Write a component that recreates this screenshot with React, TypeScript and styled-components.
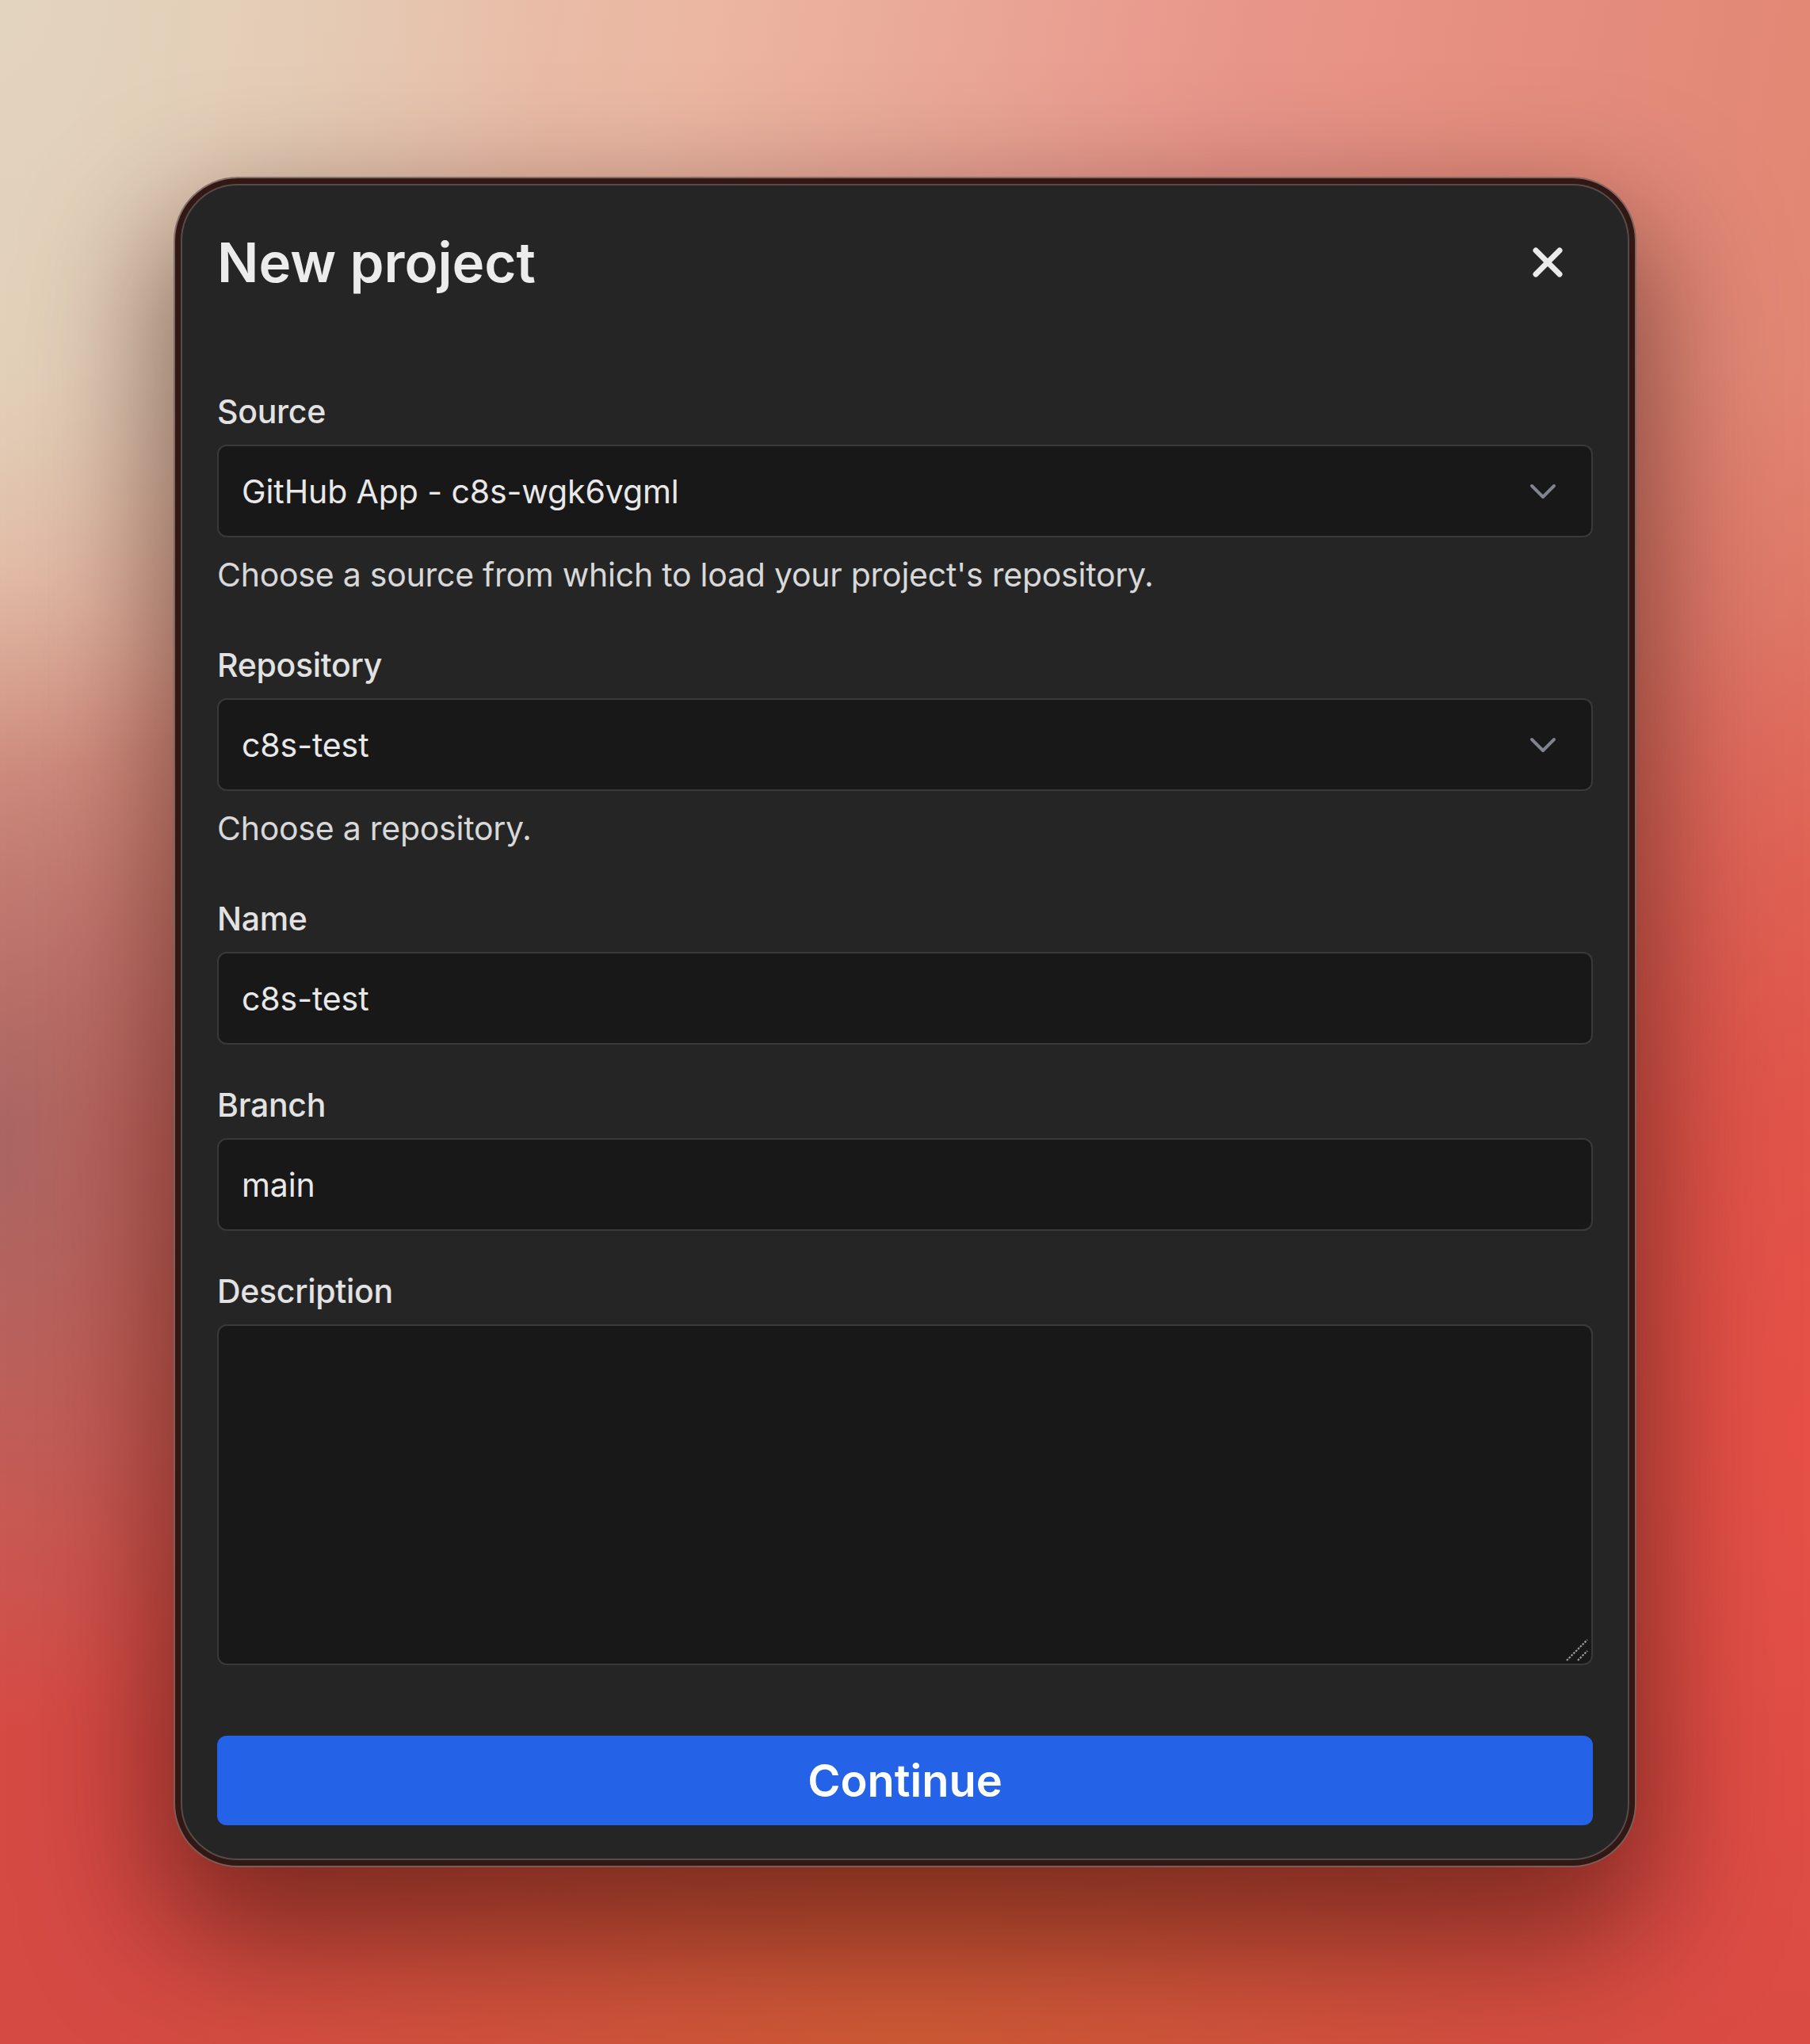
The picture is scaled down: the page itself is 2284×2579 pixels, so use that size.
import styled, { createGlobalStyle } from "styled-components";

const GlobalStyle = createGlobalStyle`
  html, body {
    margin: 0;
    padding: 0;
  }

  body {
    font-family: Inter, "Liberation Sans", sans-serif;
    -webkit-font-smoothing: antialiased;
  }

  * {
    box-sizing: border-box;
  }
`;

const ChevronIcon = () => (
  <svg width="56" height="56" viewBox="0 0 24 24" fill="none" stroke="currentColor" strokeWidth="1.7" strokeLinecap="round" strokeLinejoin="round">
    <path d="m6 9 6 6 6-6" />
  </svg>
);

const CloseIcon = () => (
  <svg width="40" height="40" viewBox="0 0 40 40" fill="none" stroke="currentColor" strokeWidth="7" strokeLinecap="round">
    <path d="M5 5 35 35" />
    <path d="M35 5 5 35" />
  </svg>
);

// the little grip in the textarea's corner
const ResizeGrip = () => (
  <svg width="30" height="30" viewBox="0 0 30 30" fill="none" stroke="#9b9b9b" strokeWidth="2.2" strokeDasharray="2.5 1.5">
    <path d="M2 28 28 2" />
    <path d="M16 28 28 16" />
  </svg>
);

const App = () => {
  return (
    <>
      <GlobalStyle />
      <Page>
        <Dialog role="dialog" aria-labelledby="new-project-title">
          <Header>
            <Title id="new-project-title">New project</Title>
            <CloseButton type="button" aria-label="Close">
              <CloseIcon />
            </CloseButton>
          </Header>

          <Form onSubmit={(e) => e.preventDefault()}>
            <Field>
              <Label>Source</Label>
              <SelectTrigger type="button">
                <span>GitHub App - c8s-wgk6vgml</span>
                <ChevronWrap>
                  <ChevronIcon />
                </ChevronWrap>
              </SelectTrigger>
              <Helper>Choose a source from which to load your project's repository.</Helper>
            </Field>

            <Field>
              <Label>Repository</Label>
              <SelectTrigger type="button">
                <span>c8s-test</span>
                <ChevronWrap>
                  <ChevronIcon />
                </ChevronWrap>
              </SelectTrigger>
              <Helper>Choose a repository.</Helper>
            </Field>

            <Field>
              <Label htmlFor="name">Name</Label>
              <TextInput id="name" defaultValue="c8s-test" />
            </Field>

            <Field>
              <Label htmlFor="branch">Branch</Label>
              <TextInput id="branch" defaultValue="main" />
            </Field>

            <Field>
              <Label htmlFor="description">Description</Label>
              <TextAreaWrap>
                <TextArea id="description" />
                <GripSpot>
                  <ResizeGrip />
                </GripSpot>
              </TextAreaWrap>
            </Field>

            <SubmitButton type="submit">Continue</SubmitButton>
          </Form>
        </Dialog>
      </Page>
    </>
  );
};

const Page = styled.div`
  min-height: 100vh;
  width: 100%;
  display: flex;
  align-items: center;
  justify-content: center;
  background-color: #dc6a5c;
  background-image:
    radial-gradient(ellipse 30% 38% at 0% 0%, rgba(227, 212, 190, 1) 0%, rgba(227, 212, 190, 0.5) 55%, rgba(227, 212, 190, 0) 100%),
    radial-gradient(ellipse 16% 28% at 0% 56%, rgba(150, 100, 100, 0.7) 0%, rgba(150, 100, 100, 0) 100%),
    radial-gradient(ellipse 45% 22% at 50% 100%, rgba(205, 92, 52, 0.9) 0%, rgba(205, 92, 52, 0) 100%),
    radial-gradient(ellipse 30% 40% at 100% 70%, rgba(232, 80, 70, 0.9) 0%, rgba(232, 80, 70, 0) 100%),
    linear-gradient(to bottom, rgba(214, 74, 68, 0) 0%, rgba(214, 74, 68, 0) 18%, rgba(214, 76, 68, 0.75) 55%, rgba(214, 74, 68, 1) 85%),
    linear-gradient(100deg, #e2cdb4 0%, #ebb7a3 32%, #e89589 58%, #df7f68 100%);
`;

const Dialog = styled.div`
  width: 1828px;
  display: flex;
  flex-direction: column;
  padding: 40px 44px 42px;
  background: #252525;
  border: 2px solid #574b49;
  border-radius: 72px;
  box-shadow:
    0 0 0 7px #311814,
    0 0 0 9px rgba(120, 100, 96, 0.85),
    0 70px 160px 30px rgba(40, 8, 0, 0.5);
`;

const Header = styled.div`
  display: flex;
  align-items: center;
  justify-content: space-between;
  margin-bottom: 106px;
`;

const Title = styled.h2`
  margin: 0;
  font-size: 69px;
  line-height: 82px;
  font-weight: 600;
  color: #ececec;
`;

const CloseButton = styled.button`
  width: 114px;
  height: 114px;
  display: flex;
  align-items: center;
  justify-content: center;
  padding: 0;
  border: none;
  background: none;
  color: #ebebeb;
  cursor: pointer;
`;

const Form = styled.form`
  display: flex;
  flex-direction: column;
  gap: 51px;
`;

const Field = styled.div`
  display: flex;
  flex-direction: column;
`;

const Label = styled.label`
  font-size: 41px;
  line-height: 50px;
  font-weight: 500;
  letter-spacing: -0.3px;
  color: #e2e2e2;
  margin-bottom: 17px;
`;

const controlBase = `
  width: 100%;
  background: #181818;
  border: 2px solid #393939;
  border-radius: 12px;
  font-family: Inter, "Liberation Sans", sans-serif;
  font-size: 41px;
  font-weight: 400;
  letter-spacing: -0.1px;
  color: #e8e8e8;
  outline: none;
`;

const SelectTrigger = styled.button`
  ${controlBase}
  height: 117px;
  display: flex;
  align-items: center;
  justify-content: space-between;
  padding: 0 33px 0 29px;
  text-align: left;
  cursor: pointer;
`;

const ChevronWrap = styled.span`
  display: flex;
  color: #80848e;
`;

const TextInput = styled.input`
  ${controlBase}
  height: 117px;
  padding: 0 29px;
`;

const TextAreaWrap = styled.div`
  position: relative;
  display: flex;
`;

const TextArea = styled.textarea`
  ${controlBase}
  height: 430px;
  padding: 24px 29px;
  resize: none;
`;

const GripSpot = styled.span`
  position: absolute;
  right: 5px;
  bottom: 4px;
  display: flex;
  pointer-events: none;
`;

const Helper = styled.p`
  margin: 22px 0 13px;
  font-size: 41px;
  line-height: 50px;
  font-weight: 400;
  letter-spacing: -0.25px;
  color: #d8d8d8;
`;

const SubmitButton = styled.button`
  margin-top: 38px;
  height: 113px;
  width: 100%;
  border: none;
  border-radius: 12px;
  background: #2463e8;
  color: #ffffff;
  font-family: Inter, "Liberation Sans", sans-serif;
  font-size: 56px;
  font-weight: 600;
  cursor: pointer;
`;

export default App;
